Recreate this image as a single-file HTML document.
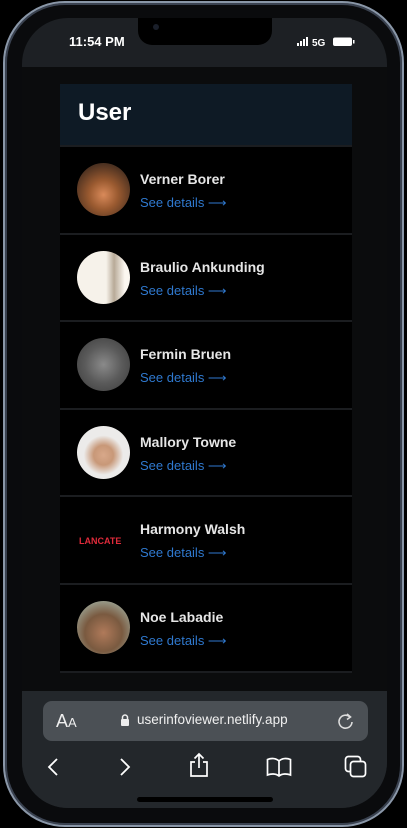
<!DOCTYPE html>
<html><head><style>
*{margin:0;padding:0;box-sizing:border-box}
body{width:407px;height:828px;background:#000;position:relative;overflow:hidden;font-family:"Liberation Sans",sans-serif}
.frame{position:absolute;left:3px;top:1px;width:401px;height:826px;border-radius:62px;background:#0a0b0d;border:2px solid #8a97a8;box-shadow:inset 0 0 0 2px #3a4250}
.screen{position:absolute;left:22px;top:18px;width:365px;height:790px;border-radius:46px;background:#1d2024;overflow:hidden}
.notch{position:absolute;left:116px;top:0;width:134px;height:27px;background:#000;border-radius:0 0 14px 14px}
.time{position:absolute;left:47px;top:16px;color:#fff;font-weight:bold;font-size:13px}
.content{position:absolute;left:0;top:49px;width:365px;height:624px;background:#0b0c0d}
.card{position:absolute;left:38px;top:17px;width:292px;height:589px;background:#000;border-bottom:2px solid #1b1d20}
.hdr{height:61px;background:#0e1a25;color:#fff;font-weight:bold;font-size:24px;padding:15px 0 0 18px}
.row{height:87.5px;border-top:2px solid #1b1d20;position:relative}
.row:first-of-type{border-top:3px solid #050607}
.av{position:absolute;left:17px;top:16px;width:53px;height:53px;border-radius:50%}
.nm{position:absolute;left:80px;top:24px;color:#e6e6e6;font-size:14px;font-weight:bold}
.sd{position:absolute;left:80px;top:48px;color:#2f79cf;font-size:13px}
.bar{position:absolute;left:0;top:673px;width:365px;height:117px;background:#23272b}
.url{position:absolute;left:21px;top:10px;width:325px;height:40px;border-radius:9px;background:#4b5055;color:#f0f0f0;font-size:13.5px}
.home{position:absolute;left:115px;top:779px;width:136px;height:5px;border-radius:3px;background:#000}
svg{position:absolute}
</style></head><body>
<div class="frame"></div>
<div class="screen">
 <div class="notch"><div style="position:absolute;left:15px;top:6px;width:6px;height:6px;border-radius:50%;background:#1a1f2a"></div></div>
 <div class="time">11:54 PM</div>
 <svg style="left:275px;top:19px" width="70" height="10"><rect x="0" y="6" width="2" height="3" fill="#fff"/><rect x="3" y="4" width="2" height="5" fill="#fff"/><rect x="6" y="2" width="2" height="7" fill="#fff"/><rect x="9" y="0" width="2" height="9" fill="#fff"/><text x="15" y="9" fill="#fff" font-size="10" font-weight="bold" font-family="Liberation Sans">5G</text><rect x="36" y="0.5" width="19" height="8.5" rx="2" fill="#fff"/><rect x="56" y="3" width="1.5" height="3.5" fill="#fff"/></svg>
 <div class="content">
  <div class="card">
   <div class="hdr">User</div>
   <div class="row"><div class="av" style="background:radial-gradient(circle at 50% 60%,#d98a5a 0,#9a5a30 35%,#4a3020 75%)"></div><div class="nm">Verner Borer</div><div class="sd">See details ⟶</div></div>
   <div class="row"><div class="av" style="background:linear-gradient(90deg,#f6f2ea 55%,#b8aa98 70%,#fbf7f0 90%)"></div><div class="nm">Braulio Ankunding</div><div class="sd">See details ⟶</div></div>
   <div class="row"><div class="av" style="background:radial-gradient(circle at 50% 50%,#8a8a8a 0,#5a5a5a 50%,#3a3a3a 100%)"></div><div class="nm">Fermin Bruen</div><div class="sd">See details ⟶</div></div>
   <div class="row"><div class="av" style="background:radial-gradient(circle at 50% 55%,#d8a88a 0,#c89878 25%,#ecebea 50%)"></div><div class="nm">Mallory Towne</div><div class="sd">See details ⟶</div></div>
   <div class="row"><div class="av" style="background:#000"><div style="position:absolute;left:2px;top:23px;color:#e02a3a;font-size:9px;font-weight:bold;letter-spacing:0">LANCATE</div></div><div class="nm">Harmony Walsh</div><div class="sd">See details ⟶</div></div>
   <div class="row"><div class="av" style="background:radial-gradient(circle at 50% 60%,#b07a5a 0,#7a5a40 45%,#9aa090 80%)"></div><div class="nm">Noe Labadie</div><div class="sd">See details ⟶</div></div>
  </div>
 </div>
 <div class="bar">
  <div class="url">
   <span style="position:absolute;left:13px;top:10px;font-size:18px;color:#eee">A<span style="font-size:13px">A</span></span>
   <svg style="left:77px;top:13px" width="10" height="12"><path d="M2.5 5V3.5a2.5 2.5 0 0 1 5 0V5" stroke="#eee" stroke-width="1.5" fill="none"/><rect x="1" y="5" width="8" height="7" rx="1" fill="#eee"/></svg>
   <span style="position:absolute;left:94px;top:11px">userinfoviewer.netlify.app</span>
   <svg style="left:294px;top:11px" width="18" height="18"><path d="M13 5A6.5 6.5 0 1 0 15 10" stroke="#ddd" stroke-width="1.6" fill="none"/><path d="M10 2l3.5 3L10 7.5" stroke="#ddd" stroke-width="1.6" fill="none"/></svg>
  </div>
  <svg style="left:25px;top:66px" width="12" height="20"><path d="M10 2L2 10l8 8" stroke="#fff" stroke-width="1.8" fill="none"/></svg>
  <svg style="left:97px;top:66px" width="12" height="20"><path d="M2 2l8 8-8 8" stroke="#fff" stroke-width="1.8" fill="none"/></svg>
  <svg style="left:167px;top:61px" width="20" height="26"><path d="M6 10H2v14h16V10h-4M10 16V2M5.5 6.5L10 2l4.5 4.5" stroke="#fff" stroke-width="1.7" fill="none"/></svg>
  <svg style="left:244px;top:66px" width="26" height="20"><path d="M13 4C10 1 5 1 1.5 2.5V18C5 16.5 10 16.5 13 19c3-2.5 8-2.5 11.5-1V2.5C21 1 16 1 13 4zM13 4v15" stroke="#fff" stroke-width="1.7" fill="none"/></svg>
  <svg style="left:322px;top:64px" width="24" height="24"><rect x="1.5" y="1.5" width="15" height="15" rx="3" stroke="#fff" stroke-width="1.7" fill="none"/><rect x="6.5" y="6.5" width="15" height="15" rx="3" stroke="#fff" stroke-width="1.7" fill="#23272b"/></svg>
 </div>
 <div class="home"></div>
</div>
</body></html>
